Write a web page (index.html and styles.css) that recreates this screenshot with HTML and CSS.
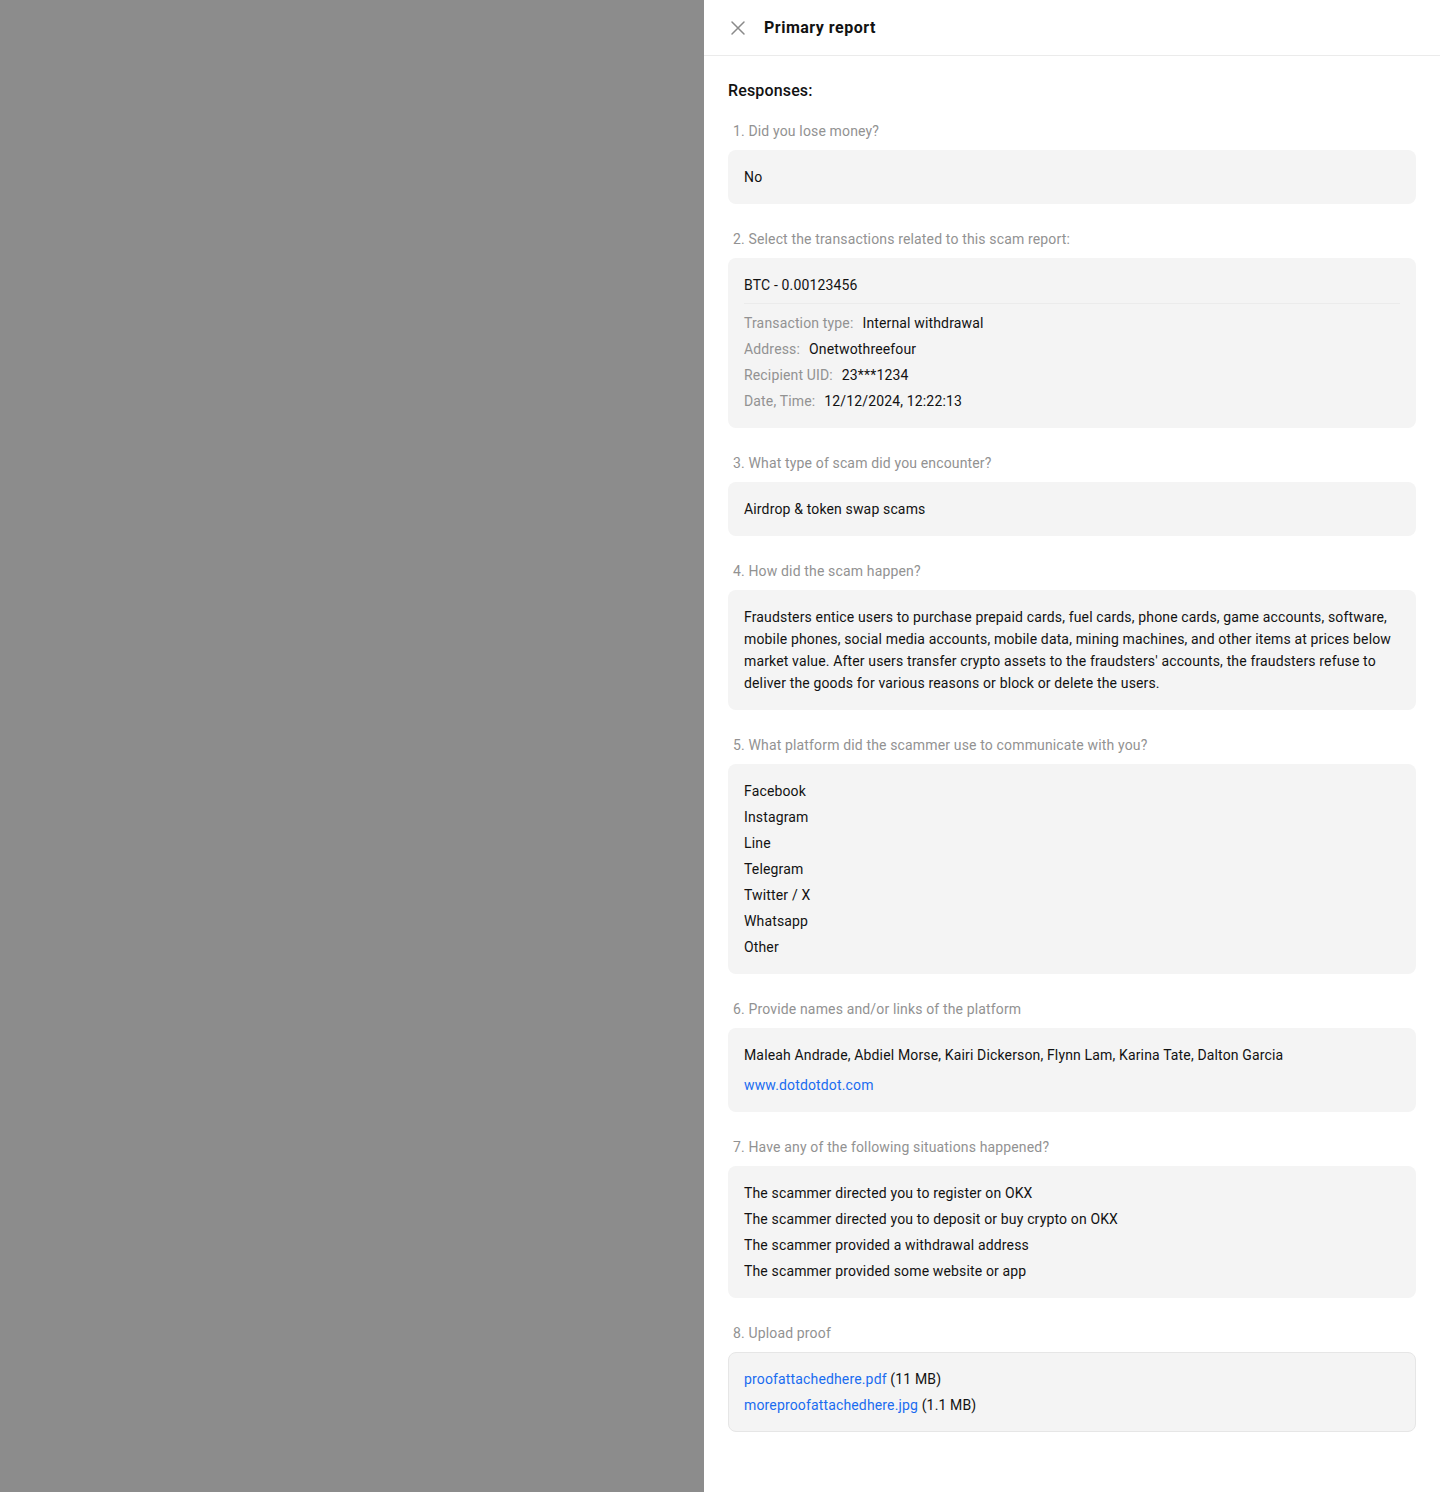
FILE: index.html
```html
<!DOCTYPE html>
<html lang="en">
<head>
<meta charset="utf-8">
<title>Primary report</title>
<link rel="stylesheet" href="styles.css">
</head>
<body>
<div class="page">
  <div class="overlay"></div>
  <aside class="drawer">
    <header class="drawer-header">
      <button class="close" aria-label="Close">
        <svg width="16" height="16" viewBox="0 0 16 16" fill="none"><path d="M2 2L14 14M14 2L2 14" stroke="#8a8a8a" stroke-width="1.5" stroke-linecap="round"/></svg>
      </button>
      <h1 class="title">Primary report</h1>
    </header>
    <main class="drawer-body">
      <h2 class="section-title">Responses:</h2>

      <div class="question">
        <div class="label">1. Did you lose money?</div>
        <div class="card"><div class="line">No</div></div>
      </div>

      <div class="question">
        <div class="label">2. Select the transactions related to this scam report:</div>
        <div class="card">
          <div class="tx-head">BTC - 0.00123456</div>
          <div class="rows">
            <div class="line"><span class="key">Transaction type:</span><span>Internal withdrawal</span></div>
            <div class="line"><span class="key">Address:</span><span>Onetwothreefour</span></div>
            <div class="line"><span class="key">Recipient UID:</span><span>23***1234</span></div>
            <div class="line"><span class="key">Date, Time:</span><span>12/12/2024, 12:22:13</span></div>
          </div>
        </div>
      </div>

      <div class="question">
        <div class="label">3. What type of scam did you encounter?</div>
        <div class="card"><div class="line">Airdrop &amp; token swap scams</div></div>
      </div>

      <div class="question">
        <div class="label">4. How did the scam happen?</div>
        <div class="card"><p class="para">Fraudsters entice users to purchase prepaid cards, fuel cards, phone cards, game accounts, software, mobile phones, social media accounts, mobile data, mining machines, and other items at prices below market value. After users transfer crypto assets to the fraudsters' accounts, the fraudsters refuse to deliver the goods for various reasons or block or delete the users.</p></div>
      </div>

      <div class="question">
        <div class="label">5. What platform did the scammer use to communicate with you?</div>
        <div class="card rows">
          <div class="line">Facebook</div>
          <div class="line">Instagram</div>
          <div class="line">Line</div>
          <div class="line">Telegram</div>
          <div class="line">Twitter / X</div>
          <div class="line">Whatsapp</div>
          <div class="line">Other</div>
        </div>
      </div>

      <div class="question">
        <div class="label">6. Provide names and/or links of the platform</div>
        <div class="card rows wide">
          <div class="line">Maleah Andrade, Abdiel Morse, Kairi Dickerson, Flynn Lam, Karina Tate, Dalton Garcia</div>
          <div class="line"><a class="link" href="#">www.dotdotdot.com</a></div>
        </div>
      </div>

      <div class="question">
        <div class="label">7. Have any of the following situations happened?</div>
        <div class="card rows">
          <div class="line">The scammer directed you to register on OKX</div>
          <div class="line">The scammer directed you to deposit or buy crypto on OKX</div>
          <div class="line">The scammer provided a withdrawal address</div>
          <div class="line">The scammer provided some website or app</div>
        </div>
      </div>

      <div class="question">
        <div class="label">8. Upload proof</div>
        <div class="card rows bordered">
          <div class="line"><a class="link" href="#">proofattachedhere.pdf</a> (11 MB)</div>
          <div class="line"><a class="link" href="#">moreproofattachedhere.jpg</a> (1.1 MB)</div>
        </div>
      </div>
    </main>
  </aside>
</div>
</body>
</html>
```
FILE: styles.css
```css
* { box-sizing: border-box; }
html, body { margin: 0; padding: 0; }
body {
  font-family: Roboto, "Noto Sans", Arial, sans-serif;
  color: #121212;
  background: #8c8c8c;
  letter-spacing: 0.15px;
}
.page {
  display: flex;
  min-height: 1492px;
}
.overlay {
  flex: 0 0 704px;
  background: #8c8c8c;
}
.drawer {
  flex: 1;
  background: #fff;
  min-height: 1492px;
}
.drawer-header {
  height: 56px;
  display: flex;
  align-items: center;
  gap: 18px;
  padding: 0 24px 0 26px;
  border-bottom: 1px solid #ebebeb;
}
.close {
  width: 16px;
  height: 16px;
  padding: 0;
  border: 0;
  background: none;
  display: flex;
  cursor: pointer;
}
.title {
  margin: 0;
  font-size: 16px;
  font-weight: 700;
  line-height: 24px;
  letter-spacing: 0.5px;
  color: #121212;
}
.drawer-body {
  padding: 23px 24px 40px;
}
.section-title {
  margin: 0 0 17px;
  font-size: 16px;
  font-weight: 500;
  line-height: 24px;
}
.question + .question { margin-top: 24px; }
.label {
  font-size: 14px;
  line-height: 22px;
  color: #929292;
  padding-left: 5px;
  margin-bottom: 8px;
}
.card {
  background: #f4f4f4;
  border-radius: 8px;
  padding: 16px;
  font-size: 14px;
  line-height: 22px;
}
.rows { display: flex; flex-direction: column; gap: 4px; }
.rows.wide { gap: 8px; }
.bordered { border: 1px solid #e6e6e6; padding: 15px; }
.line { display: block; }
.rows .line:has(.key) { display: flex; gap: 9px; }
.line .key { color: #929292; }
.tx-head {
  padding-bottom: 7px;
  border-bottom: 1px solid #ebebeb;
  margin-bottom: 8px;
}
.para { margin: 0; }
.link { color: #1a6cf0; text-decoration: none; }
```
